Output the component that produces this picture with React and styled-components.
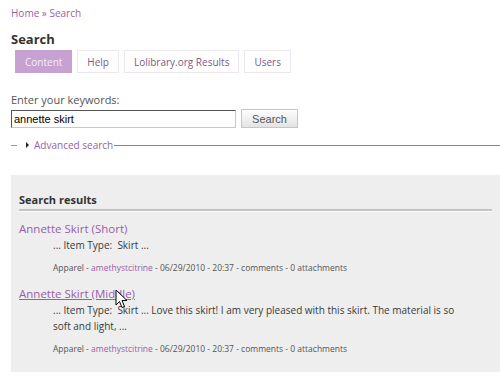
import React from "react";
import styled, { createGlobalStyle } from "styled-components";

const GlobalStyle = createGlobalStyle`
  html, body {
    margin: 0;
    padding: 0;
    background: #ffffff;
  }
  body {
    font-family: "Open Sans", "DejaVu Sans", sans-serif;
    color: #444;
  }
`;

const results = [
  {
    title: "Annette Skirt (Short)",
    snippet: "... Item Type:\u00a0 Skirt ...",
    hover: false,
  },
  {
    title: "Annette Skirt (Middle)",
    snippet:
      "... Item Type:\u00a0 Skirt ... Love this skirt! I am very pleased with this skirt. The material is so soft and light, ...",
    hover: true,
  },
];

const tabs = ["Content", "Help", "Lolibrary.org Results", "Users"];

const App = () => {
  return (
    <Page>
      <GlobalStyle />
      <Breadcrumb>
        <Link>Home</Link> » <Link>Search</Link>
      </Breadcrumb>
      <Title>Search</Title>
      <Tabs>
        {tabs.map((tab, index) => (
          <Tab key={tab} $active={index === 0}>
            {tab}
          </Tab>
        ))}
      </Tabs>

      <Label>Enter your keywords:</Label>
      <SearchRow>
        <Input defaultValue="annette skirt" />
        <Button>Search</Button>
      </SearchRow>

      <Fieldset>
        <Dash />
        <Arrow />
        <Link>Advanced search</Link>
        <Rule />
      </Fieldset>

      <Panel>
        <PanelTitle>Search results</PanelTitle>
        {results.map((result) => (
          <Result key={result.title}>
            <ResultTitle $hover={result.hover}>
              <span>{result.title}</span>
              {result.hover && (
                <Cursor width="13" height="20" viewBox="0 0 13 20">
                  <path
                    d="M1 1 L1 16 L4.5 12.5 L7 18.5 L9.5 17.5 L7 11.5 L12 11.5 Z"
                    fill="#fff"
                    stroke="#000"
                    strokeWidth="1"
                    strokeLinejoin="round"
                  />
                </Cursor>
              )}
            </ResultTitle>
            <Snippet>{result.snippet}</Snippet>
            <Meta>
              Apparel - <Link>amethystcitrine</Link> - 06/29/2010 - 20:37 -
              comments - 0 attachments
            </Meta>
          </Result>
        ))}
      </Panel>
    </Page>
  );
};

const Page = styled.div`
  padding: 6px 0 0 11px;
`;

const Link = styled.span`
  color: #985fa6;
`;

const Breadcrumb = styled.div`
  font-size: 10px;
  line-height: 14px;
  color: #985fa6;
`;

const Title = styled.h1`
  margin: 10px 0 0 0;
  font-size: 13px;
  line-height: 18px;
  font-weight: bold;
  color: #333;
`;

const Tabs = styled.div`
  display: flex;
  gap: 5px;
  margin: 2px 0 0 4px;
`;

const Tab = styled.div`
  height: 23px;
  box-sizing: border-box;
  padding: 0 9px;
  display: flex;
  align-items: center;
  font-size: 10px;
  border: 1px solid ${({ $active }) => ($active ? "#c7a1d2" : "#ece6ee")};
  background: ${({ $active }) => ($active ? "#c7a1d2" : "#fff")};
  color: ${({ $active }) => ($active ? "#f4eef6" : "#7d5a88")};
`;

const Label = styled.div`
  margin-top: 20px;
  font-size: 11px;
  line-height: 14px;
  color: #555;
`;

const SearchRow = styled.div`
  display: flex;
  align-items: center;
  gap: 5px;
  margin-top: 2px;
`;

const Input = styled.input`
  width: 225px;
  height: 18px;
  box-sizing: border-box;
  padding: 0 2px;
  border: 1px solid #c8c8c8;
  border-top-color: #555;
  border-left-color: #555;
  font-family: "Liberation Sans", Arial, sans-serif;
  font-size: 11px;
  color: #000;
  outline: none;
`;

const Button = styled.button`
  width: 57px;
  height: 19px;
  padding: 0;
  border: 1px solid #c6c6c6;
  background: linear-gradient(#fdfdfd, #e4e4e4);
  font-family: "Liberation Sans", Arial, sans-serif;
  font-size: 11px;
  color: #555;
`;

const Fieldset = styled.div`
  display: flex;
  align-items: center;
  margin-top: 10px;
  height: 14px;
  font-size: 10px;
`;

const Dash = styled.span`
  width: 6px;
  height: 1px;
  margin-right: 9px;
  background: #999;
`;

const Arrow = styled.span`
  width: 0;
  height: 0;
  margin-right: 5px;
  border-top: 3px solid transparent;
  border-bottom: 3px solid transparent;
  border-left: 3px solid #222;
`;

const Rule = styled.span`
  flex: 1;
  height: 1px;
  background: #888;
  margin-left: 1px;
`;

const Panel = styled.div`
  margin-top: 23px;
  background: #eeeeee;
  padding: 18px 8px 17px 8px;
`;

const PanelTitle = styled.h2`
  margin: 0;
  padding-bottom: 2px;
  font-size: 11px;
  line-height: 14px;
  font-weight: bold;
  color: #333;
  border-bottom: 2px solid #c4c4c4;
  box-shadow: 0 1px 0 #fafafa;
`;

const Result = styled.div`
  margin-top: 11px;

  & + & {
    margin-top: 13px;
  }
`;

const ResultTitle = styled.div`
  position: relative;
  font-size: 11.5px;
  line-height: 14px;
  color: #985fa6;
  text-decoration: ${({ $hover }) => ($hover ? "underline" : "none")};
`;

const Cursor = styled.svg`
  position: absolute;
  left: 96px;
  top: 2px;
`;

const Snippet = styled.div`
  margin: 1px 0 0 34px;
  padding-right: 28px;
  font-size: 10px;
  line-height: 16px;
  color: #3a3a3a;
`;

const Meta = styled.div`
  margin: 9px 0 0 34px;
  font-size: 8.5px;
  line-height: 12px;
  color: #555;
`;

export default App;
